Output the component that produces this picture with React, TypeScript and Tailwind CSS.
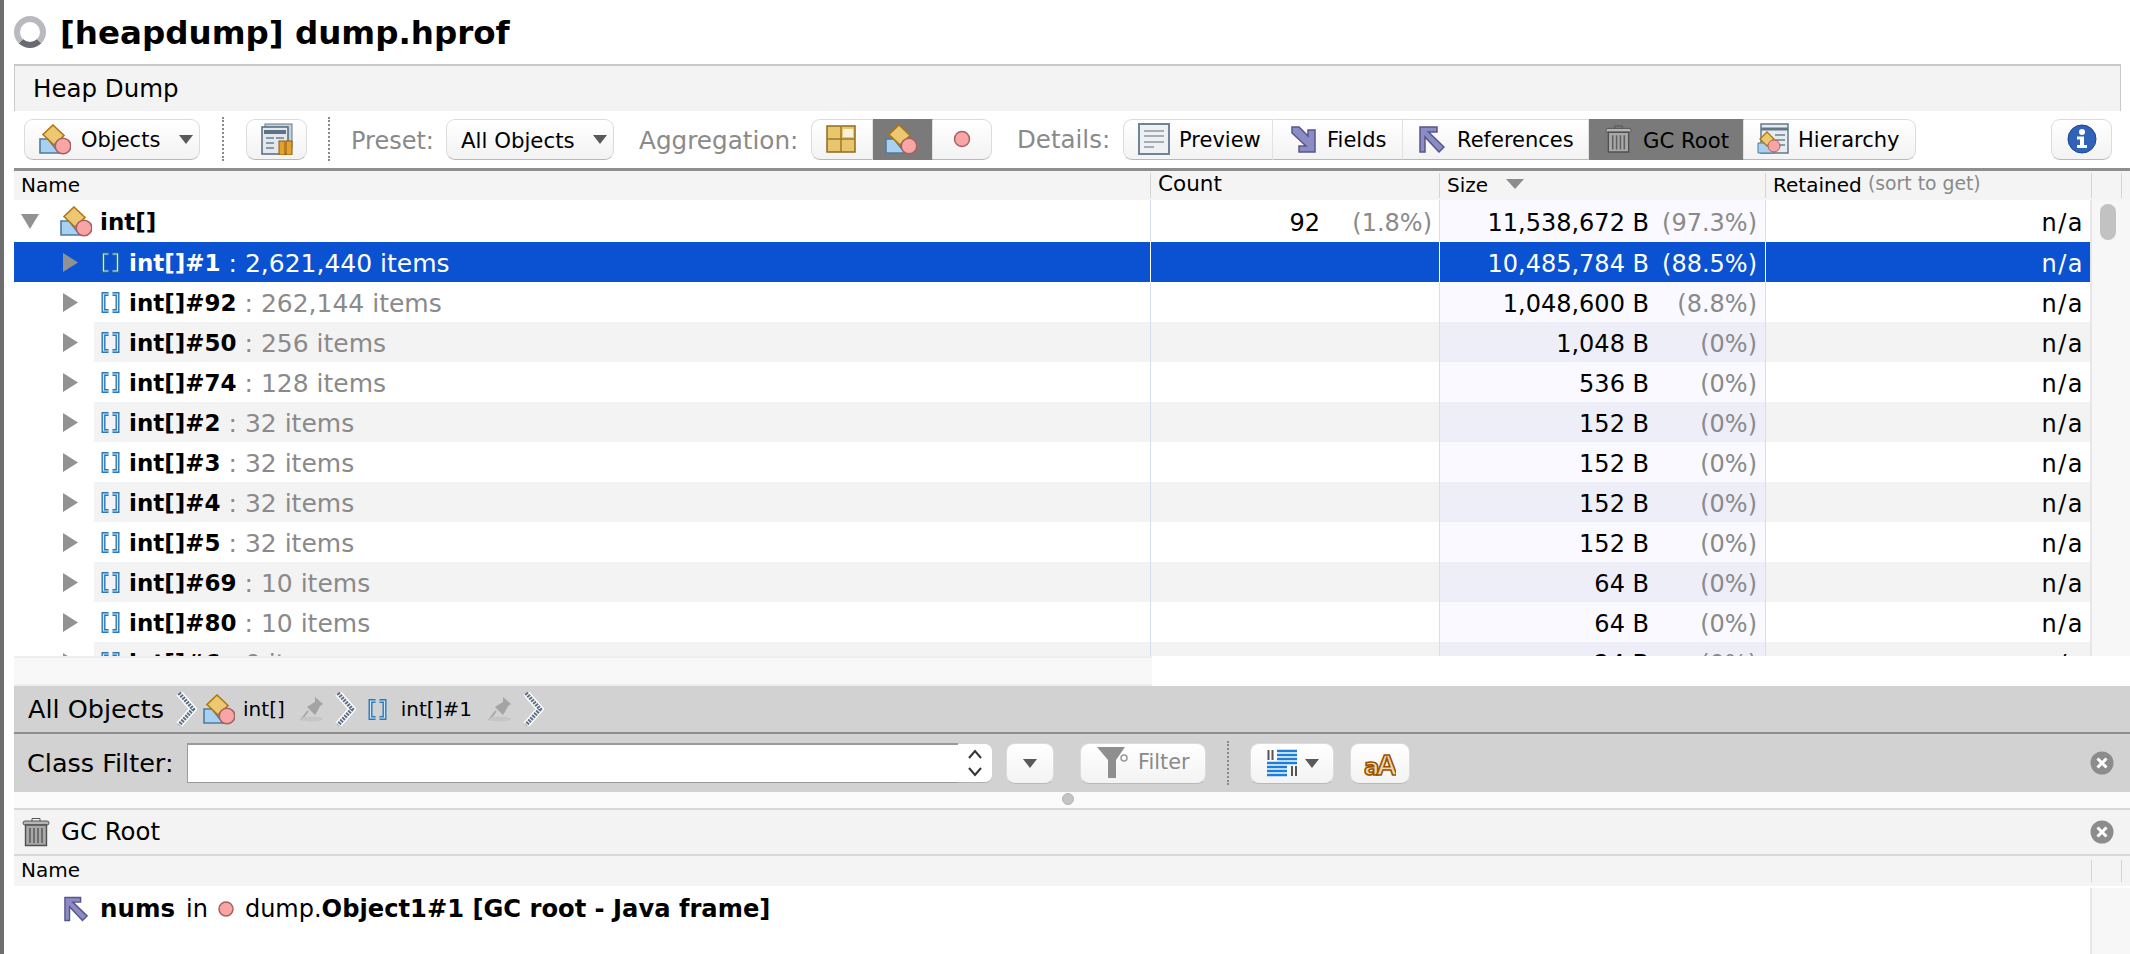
import type { ReactNode } from 'react';

// Small drawings used across the toolbars and the tree
const ObjectsIcon = ({ className = 'w-[32px] h-[31px]' }: { className?: string }) => (
  <svg viewBox="0 0 32 31" className={`${className} shrink-0`}>
    <path d="M1 15h8l11 14H1z" fill="#a9d0f0" stroke="#4c7c9e" strokeWidth="1.6" />
    <path d="M14 1l11 10.500L15 21 4 10.500z" fill="#ecc873" stroke="#b1770f" strokeWidth="1.6" />
    <circle cx="24" cy="22" r="7.800" fill="#f8a5a5" stroke="#a85f63" strokeWidth="1.6" />
  </svg>
);

const ArrayIcon = ({ muted = false }: { muted?: boolean }) => (
  <svg viewBox="0 0 19 21" className="w-[19px] h-[21px] shrink-0">
    <path d="M7.500 2H2.500v17h5M11.500 2h5v17h-5" fill="none" stroke={muted ? '#1c62a0' : '#2a78b8'} strokeWidth="4" />
    <path d="M7.500 2H2.500v17h5M11.500 2h5v17h-5" fill="none" stroke="#d4e9f8" strokeWidth="1.200" />
  </svg>
);

const TrashIcon = ({ className = 'w-[28px] h-[30px]' }: { className?: string }) => (
  <svg viewBox="0 0 28 30" className={`${className} shrink-0`}>
    <rect x="1" y="4" width="26" height="4" rx="2" fill="#b5b5b5" stroke="#555" />
    <path d="M10 4V1.500h8V4" fill="none" stroke="#555" />
    <path d="M3.500 8h21v20.500h-21z" fill="#a8a8a8" stroke="#505050" strokeWidth="1.400" />
    <path d="M8 11v15M12 11v15M16 11v15M20 11v15" stroke="#5f5f5f" strokeWidth="1.600" />
  </svg>
);

const ArrowUpLeft = ({ className = 'w-[26px] h-[27px]' }: { className?: string }) => (
  <svg viewBox="0 0 26 27" className={`${className} shrink-0`}>
    <path d="M1 1h17v5H9.500L25 21l-5 5L6 11v15H1z" fill="#8c8cc4" stroke="#55558a" strokeWidth="1.500" />
  </svg>
);

const ArrowDownRight = () => (
  <svg viewBox="0 0 26 27" className="w-[26px] h-[27px] shrink-0">
    <path d="M2 1h7l9 9V4h7v22H9v-6h7L2 7z" fill="#8c8cc4" stroke="#55558a" strokeWidth="1.500" />
  </svg>
);

const Caret = () => (
  <svg viewBox="0 0 14 9" className="w-[14px] h-[9px] shrink-0">
    <path d="M0 0h14L7 9z" fill="#5a5a5a" />
  </svg>
);

const TreeArrow = () => (
  <svg viewBox="0 0 15 19" className="w-[15px] h-[19px] shrink-0">
    <path d="M0 0l15 9.500L0 19z" fill="#929292" />
  </svg>
);

const Chevron = () => (
  <svg viewBox="0 0 22 34" className="w-[22px] h-[34px] shrink-0">
    <path d="M4 1l14 16L4 33" fill="none" stroke="#fff" strokeWidth="7" />
    <path d="M4 1l14 16L4 33" fill="none" stroke="#5f7088" strokeWidth="4" strokeDasharray="2 1" />
  </svg>
);

const Pin = () => (
  <svg viewBox="0 0 28 28" className="w-[28px] h-[28px] shrink-0">
    <path d="M17 2l8 7-3 2-3 6-2 3-8-8 3-2 5-3z" fill="#a4a4a4" />
    <path d="M10 16L3 25" stroke="#a8a8a8" strokeWidth="2" />
    <ellipse cx="14" cy="24" rx="11" ry="2.500" fill="#c6c6c6" />
  </svg>
);

const CloseDot = () => (
  <svg viewBox="0 0 24 24" className="w-[24px] h-[24px] shrink-0">
    <circle cx="12" cy="12" r="11.500" fill="#8c8c8c" />
    <path d="M7.500 7.500l9 9M16.500 7.500l-9 9" stroke="#fff" strokeWidth="3" />
  </svg>
);

const ToolbarButton = ({ width, className = '', children }: { width: string; className?: string; children: ReactNode }) => (
  <div
    className={`${width} h-[41px] flex items-center shrink-0 rounded-[9px] border border-[#dcdcdc] border-b-[#b8b8b8] bg-linear-to-b from-white to-[#f3f3f3] ${className}`}
  >
    {children}
  </div>
);

const Dotted = ({ className = '' }: { className?: string }) => (
  <div className={`w-0 h-[44px] border-l-2 border-dotted border-[#8a8a8a] shrink-0 ${className}`} />
);

const Seg = ({
  width,
  active = false,
  first = false,
  last = false,
  children,
}: {
  width: string;
  active?: boolean;
  first?: boolean;
  last?: boolean;
  children: ReactNode;
}) => (
  <div
    className={`${width} h-[41px] flex items-center shrink-0 border-y ${
      active
        ? 'bg-[#7a7a7a] border-[#7a7a7a]'
        : 'bg-linear-to-b from-white to-[#f3f3f3] border-t-[#dcdcdc] border-b-[#b8b8b8]'
    } ${first ? 'rounded-l-[9px] border-l border-l-[#dcdcdc]' : ''} ${last ? 'rounded-r-[9px] border-r border-r-[#dcdcdc]' : 'border-r border-r-[#e2e2e2]'}`}
  >
    {children}
  </div>
);

type Row = { name: string; items: string; size: string; pct: string };

const rows: Row[] = [
  { name: 'int[]#1', items: '2,621,440 items', size: '10,485,784 B', pct: '(88.5%)' },
  { name: 'int[]#92', items: '262,144 items', size: '1,048,600 B', pct: '(8.8%)' },
  { name: 'int[]#50', items: '256 items', size: '1,048 B', pct: '(0%)' },
  { name: 'int[]#74', items: '128 items', size: '536 B', pct: '(0%)' },
  { name: 'int[]#2', items: '32 items', size: '152 B', pct: '(0%)' },
  { name: 'int[]#3', items: '32 items', size: '152 B', pct: '(0%)' },
  { name: 'int[]#4', items: '32 items', size: '152 B', pct: '(0%)' },
  { name: 'int[]#5', items: '32 items', size: '152 B', pct: '(0%)' },
  { name: 'int[]#69', items: '10 items', size: '64 B', pct: '(0%)' },
  { name: 'int[]#80', items: '10 items', size: '64 B', pct: '(0%)' },
  { name: 'int[]#6', items: '0 items', size: '24 B', pct: '(0%)' },
];

const TreeRow = ({ row, index }: { row: Row; index: number }) => {
  const selected = index === 0;
  const striped = index % 2 === 0 && !selected;
  return (
    <div className={`flex h-[40px] shrink-0 ${selected ? 'bg-[#0a52d1] text-white' : 'text-black'}`}>
      <div className="w-[1136px] flex items-center shrink-0">
        <div className="w-[80px] pl-[49px] flex items-center shrink-0">
          <TreeArrow />
        </div>
        <div className={`flex-1 h-full flex items-center ${striped ? 'bg-[#f3f3f3]' : ''}`}>
          <div className="ml-[7px] mr-[9px]">
            <ArrayIcon muted={selected} />
          </div>
          <span className="mt-[3px] font-bold text-[23px] whitespace-pre">{row.name}</span>
          <span className={`mt-[3px] text-[25px] whitespace-pre ${selected ? 'text-white' : 'text-[#8a8a8a]'}`}> : {row.items}</span>
        </div>
      </div>
      <div
        className={`w-[289px] shrink-0 border-l ${selected ? 'border-white' : 'border-[#d6dff0]'} ${striped ? 'bg-[#f3f3f3]' : ''}`}
      />
      <div
        className={`w-[326px] shrink-0 flex items-center justify-end pr-[8px] pt-[3px] border-l text-[24px] ${
          selected ? 'border-white' : striped ? 'bg-[#eeeef8] border-[#d6dff0]' : 'bg-[#f9f9ff] border-[#d6dff0]'
        }`}
      >
        <span>{row.size}</span>
        <span className={`w-[108px] text-right ${selected ? 'text-white' : 'text-[#8a8a8a]'}`}>{row.pct}</span>
      </div>
      <div
        className={`w-[325px] shrink-0 flex items-center justify-end pr-[6px] pt-[3px] border-l text-[24px] tracking-[1.500px] ${
          selected ? 'border-white' : 'border-[#d6dff0]'
        } ${striped ? 'bg-[#f3f3f3]' : ''}`}
      >
        n/a
      </div>
    </div>
  );
};

export default function App() {
  return (
    <div className="flex w-[2130px] h-[954px] overflow-hidden bg-white text-black font-['DejaVu_Sans',sans-serif]">
      <div className="w-[4px] shrink-0 bg-[#6e6e6e]" />
      <div className="flex-1 min-w-0 flex flex-col pl-[10px]">
        {/* Title */}
        <div className="h-[64px] shrink-0 flex items-center">
          <div className="w-[32px] h-[32px] rounded-full border-[6px] border-[#b9b9c0] border-b-[#6a6a72] shrink-0" />
          <h1 className="ml-[14px] text-[32.500px] font-bold leading-none pt-[3px]">[heapdump] dump.hprof</h1>
        </div>

        {/* Tab strip */}
        <div className="h-[47px] w-[2107px] shrink-0 flex items-center pl-[18px] pt-[2px] bg-[#f3f3f3] border-t-2 border-x border-[#c9c9c9] text-[24.500px]">
          Heap Dump
        </div>

        {/* Main toolbar */}
        <div className="h-[57px] shrink-0 flex items-center pl-[10px] pb-[1px]">
          <ToolbarButton width="w-[176px]" className="pl-[14px] pr-[6px]">
            <ObjectsIcon />
            <span className="ml-[10px] mt-[4px] text-[21px]">Objects</span>
            <span className="ml-auto"><Caret /></span>
          </ToolbarButton>
          <Dotted className="ml-[22px]" />
          <ToolbarButton width="w-[61px]" className="ml-[22px] justify-center">
            <svg viewBox="0 0 32 32" className="w-[32px] h-[32px]">
              <rect x="4" y="1" width="27" height="24" fill="#c8d2da" stroke="#62788a" />
              <rect x="1" y="4" width="26" height="27" fill="#e4e8ec" stroke="#53697c" strokeWidth="1.500" />
              <path d="M3 7h22v4H3z" fill="#5d7488" />
              <path d="M5 15h8M15 15h8M5 20h8M5 25h8" stroke="#8799a8" strokeWidth="2" />
              <rect x="18" y="18" width="6" height="14" fill="#e2a22b" stroke="#8d5a10" />
              <rect x="25" y="18" width="6" height="14" fill="#e2a22b" stroke="#8d5a10" />
            </svg>
          </ToolbarButton>
          <Dotted className="ml-[21px]" />
          <span className="ml-[21px] mt-[3px] w-[95px] shrink-0 text-[24px] text-[#8a8a8a]">Preset:</span>
          <ToolbarButton width="w-[168px]" className="pl-[14px] pr-[6px]">
            <span className="mt-[4px] text-[21.300px] whitespace-nowrap">All Objects</span>
            <span className="ml-auto"><Caret /></span>
          </ToolbarButton>
          <span className="ml-[25px] mt-[3px] w-[172px] shrink-0 text-[24.700px] text-[#8a8a8a]">Aggregation:</span>
          <div className="flex shrink-0">
            <Seg width="w-[62px]" first>
              <svg viewBox="0 0 30 28" className="w-[30px] h-[28px] ml-[14px]">
                <rect x="1" y="1" width="28" height="26" fill="#e9c66e" stroke="#8e6b1e" strokeWidth="1.500" />
                <path d="M15 1v26M1 14h28" stroke="#9a7a2c" strokeWidth="1.500" />
                <rect x="17" y="4" width="10" height="8" fill="#f8f1da" />
              </svg>
            </Seg>
            <Seg width="w-[60px]" active>
              <span className="ml-[12px]"><ObjectsIcon /></span>
            </Seg>
            <Seg width="w-[59px]" last>
              <svg viewBox="0 0 18 18" className="w-[18px] h-[18px] ml-[20px]">
                <circle cx="9" cy="9" r="7.500" fill="#f8a5a5" stroke="#a85f63" strokeWidth="1.500" />
              </svg>
            </Seg>
          </div>
          <span className="ml-[25px] mt-[3px] w-[106px] shrink-0 text-[24.500px] text-[#8a8a8a]">Details:</span>
          <div className="flex shrink-0">
            <Seg width="w-[150px]" first>
              <svg viewBox="0 0 32 32" className="w-[32px] h-[32px] ml-[14px]">
                <rect x="1" y="1" width="30" height="30" fill="#eef0f2" stroke="#6f8496" strokeWidth="2" />
                <path d="M6 8h20M6 13h20M6 19h20M6 24h10" stroke="#a4aeb6" strokeWidth="2" />
              </svg>
              <span className="ml-[9px] mt-[4px] text-[21px]">Preview</span>
            </Seg>
            <Seg width="w-[130px]">
              <span className="ml-[17px]"><ArrowDownRight /></span>
              <span className="ml-[11px] mt-[4px] text-[21px]">Fields</span>
            </Seg>
            <Seg width="w-[186px]">
              <span className="ml-[16px]"><ArrowUpLeft /></span>
              <span className="ml-[12px] mt-[4px] text-[21px]">References</span>
            </Seg>
            <Seg width="w-[155px]" active>
              <span className="ml-[16px]"><TrashIcon className="w-[27px] h-[30px]" /></span>
              <span className="ml-[11px] mt-[4px] text-[21.200px]">GC Root</span>
            </Seg>
            <Seg width="w-[172px]" last>
              <svg viewBox="0 0 32 32" className="w-[32px] h-[32px] ml-[13px]">
                <rect x="4" y="1" width="27" height="29" fill="#e8ebee" stroke="#62788a" strokeWidth="1.500" />
                <path d="M4 6h27" stroke="#62788a" strokeWidth="3" />
                <path d="M18 12h10M18 17h10M18 22h10" stroke="#8c9aa6" strokeWidth="2" />
                <path d="M1 20h16v10H1z" fill="#a9d0f0" stroke="#4c7c9e" />
                <path d="M10 9l7 7-7 7-7-7z" fill="#ecc873" stroke="#b1770f" strokeWidth="1.300" />
                <circle cx="17" cy="23" r="6" fill="#f8a5a5" stroke="#a85f63" />
              </svg>
              <span className="ml-[9px] mt-[4px] text-[21px]">Hierarchy</span>
            </Seg>
          </div>
          <ToolbarButton width="w-[61px]" className="ml-auto mr-[18px] justify-center">
            <svg viewBox="0 0 30 30" className="w-[30px] h-[30px]">
              <circle cx="15" cy="15" r="14" fill="#2f62b8" stroke="#1d4488" />
              <circle cx="15" cy="8" r="3" fill="#fff" />
              <path d="M10 12.500h7V21h3v3H10v-3h3v-5.500h-3z" fill="#fff" />
            </svg>
          </ToolbarButton>
        </div>

        <div className="h-[3px] shrink-0 bg-[#8e8e8e]" />

        {/* Column headers */}
        <div className="h-[29px] shrink-0 flex bg-[#f4f4f4] text-[20px]">
          <div className="w-[1136px] shrink-0 pl-[7px] pb-[2px] flex items-center">Name</div>
          <div className="w-[289px] shrink-0 my-[2px] pl-[7px] pb-[2px] flex items-center border-l border-[#d4d4d4] text-[21.500px]">Count</div>
          <div className="w-[326px] shrink-0 my-[2px] pl-[7px] pb-[2px] flex items-center border-l border-[#d4d4d4]">
            Size
            <span className="ml-[18px] mb-[2px]">
              <svg viewBox="0 0 18 10" className="w-[18px] h-[10px]">
                <path d="M0 0h18L9 10z" fill="#8c8c8c" />
              </svg>
            </span>
          </div>
          <div className="w-[326px] shrink-0 my-[2px] pl-[7px] pb-[2px] flex items-center border-l border-[#d4d4d4] whitespace-pre">
            Retained <span className="text-[18.800px] text-[#8a8a8a]">(sort to get)</span>
          </div>
          <div className="w-[30px] shrink-0 my-[2px] border-l border-[#d4d4d4]" />
          <div className="flex-1 my-[2px] border-l border-[#d4d4d4]" />
        </div>

        {/* Tree table */}
        <div className="h-[456px] shrink-0 flex overflow-hidden">
          <div className="w-[2076px] shrink-0 flex flex-col">
            <div className="flex h-[42px] shrink-0">
              <div className="w-[1136px] shrink-0 flex items-center">
                <svg viewBox="0 0 18 15" className="w-[18px] h-[15px] ml-[7px] shrink-0">
                  <path d="M0 0h18L9 15z" fill="#929292" />
                </svg>
                <span className="ml-[21px]"><ObjectsIcon /></span>
                <span className="ml-[8px] mt-[3px] font-bold text-[23px]">int[]</span>
              </div>
              <div className="w-[289px] shrink-0 flex items-center justify-end pr-[7px] pt-[3px] border-l border-[#d6dff0] text-[24px]">
                <span>92</span>
                <span className="w-[112px] text-right text-[#8a8a8a]">(1.8%)</span>
              </div>
              <div className="w-[326px] shrink-0 flex items-center justify-end pr-[8px] pt-[3px] border-l border-[#d6dff0] bg-[#f9f9ff] text-[24px]">
                <span>11,538,672 B</span>
                <span className="w-[108px] text-right text-[#8a8a8a]">(97.3%)</span>
              </div>
              <div className="w-[325px] shrink-0 flex items-center justify-end pr-[6px] pt-[3px] border-l border-[#d6dff0] text-[24px] tracking-[1.500px]">n/a</div>
            </div>
            {rows.map((row, i) => (
              <TreeRow key={row.name} row={row} index={i} />
            ))}
          </div>
          <div className="flex-1 bg-[#f7f7f7] border-l-2 border-[#e6e6e6] pl-[8px] pt-[4px]">
            <div className="w-[16px] h-[36px] rounded-full bg-[#c2c2c2]" />
          </div>
        </div>

        {/* Horizontal scroll strip */}
        <div className="h-[30px] shrink-0 w-[1138px] bg-[#f8f8f8] border-t-2 border-b-2 border-[#eeeeee]" />

        {/* Breadcrumb */}
        <div className="h-[46px] shrink-0 flex items-center pl-[14px] bg-[#d2d2d2]">
          <span className="text-[25.500px] whitespace-nowrap">All Objects</span>
          <span className="ml-[11px]"><Chevron /></span>
          <span className="ml-[6px]"><ObjectsIcon /></span>
          <span className="ml-[8px] text-[20px]">int[]</span>
          <span className="ml-[13px]"><Pin /></span>
          <span className="ml-[8px]"><Chevron /></span>
          <span className="ml-[12px]"><ArrayIcon /></span>
          <span className="ml-[14px] text-[20px]">int[]#1</span>
          <span className="ml-[14px]"><Pin /></span>
          <span className="ml-[8px]"><Chevron /></span>
        </div>
        <div className="h-[2px] shrink-0 bg-[#8e8e8e]" />

        {/* Class filter */}
        <div className="h-[58px] shrink-0 flex items-center pl-[13px] bg-[#d2d2d2]">
          <span className="w-[160px] shrink-0 text-[25.500px] whitespace-nowrap">Class Filter:</span>
          <div className="w-[771px] h-[40px] shrink-0 bg-white border-t-2 border-b border-l border-[#9a9a9a]" />
          <div className="w-[34px] h-[39px] shrink-0 bg-white rounded-r-[7px] border-b border-[#b0b0b0] flex items-center justify-center">
            <svg viewBox="0 0 16 30" className="w-[16px] h-[30px]">
              <path d="M2 10l6-7 6 7M2 20l6 7 6-7" fill="none" stroke="#333" strokeWidth="2" />
            </svg>
          </div>
          <ToolbarButton width="w-[48px]" className="ml-[14px] justify-center">
            <Caret />
          </ToolbarButton>
          <ToolbarButton width="w-[126px]" className="ml-[26px] pl-[15px]">
            <svg viewBox="0 0 34 38" className="w-[34px] h-[38px] shrink-0">
              <path d="M1 3h28L20 16v18h-8V16z" fill="#8f8f8f" />
              <circle cx="28" cy="14" r="3" fill="none" stroke="#9a9a9a" strokeWidth="1.500" />
            </svg>
            <span className="ml-[8px] text-[20.800px] text-[#8a8a8a]">Filter</span>
          </ToolbarButton>
          <Dotted className="ml-[21px]" />
          <ToolbarButton width="w-[84px]" className="ml-[21px] pl-[16px]">
            <svg viewBox="0 0 30 28" className="w-[30px] h-[28px] shrink-0">
              <path d="M10 2h20M10 6h20M10 10h20" stroke="#1a7fd8" strokeWidth="2.500" />
              <path d="M0 14h30" stroke="#1a7fd8" strokeWidth="2.500" />
              <path d="M0 18h20M0 22h20M0 26h20" stroke="#1a7fd8" strokeWidth="2.500" />
              <path d="M1.500 1v10M5.500 1v10M25 17v10M29 17v10" stroke="#555" strokeWidth="2" />
            </svg>
            <span className="ml-[8px]"><Caret /></span>
          </ToolbarButton>
          <ToolbarButton width="w-[60px]" className="ml-[16px] justify-center">
            <svg viewBox="0 0 32 30" className="w-[32px] h-[30px]">
              <text x="0" y="27" fontSize="23" fontWeight="700" fill="#f0d6a8" stroke="#9a5200" strokeWidth="1.600" fontFamily="'DejaVu Sans', sans-serif">a</text>
              <text x="12" y="27" fontSize="30" fontWeight="700" fill="#f0d6a8" stroke="#9a5200" strokeWidth="1.600" fontFamily="'Liberation Sans', sans-serif">A</text>
            </svg>
          </ToolbarButton>
          <span className="ml-auto mr-[16px]"><CloseDot /></span>
        </div>

        {/* Splitter */}
        <div className="h-[16px] shrink-0 flex justify-center bg-[#fbfbfb] pr-[8px]">
          <div className="w-[12px] h-[12px] mt-[1px] rounded-full bg-[#c4c4c4] border border-[#b4b4b4]" />
        </div>
        <div className="h-[2px] shrink-0 bg-[#d8d8d8]" />

        {/* GC Root panel */}
        <div className="h-[44px] shrink-0 flex items-center pl-[8px] bg-[#f3f3f3]">
          <TrashIcon />
          <span className="ml-[11px] text-[24.400px]">GC Root</span>
          <span className="ml-auto mr-[16px]"><CloseDot /></span>
        </div>
        <div className="h-[2px] shrink-0 bg-[#d8d8d8]" />
        <div className="h-[30px] shrink-0 flex bg-[#f4f4f4] text-[20px]">
          <div className="w-[2077px] shrink-0 pl-[7px] pb-[2px] flex items-center">Name</div>
          <div className="w-[30px] shrink-0 my-[4px] border-l border-[#d4d4d4]" />
          <div className="flex-1 my-[4px] border-l border-[#d4d4d4]" />
        </div>
        <div className="flex-1 min-h-0 flex">
          <div className="w-[2076px] shrink-0 h-[46px] flex items-center pl-[50px]">
            <ArrowUpLeft className="w-[24px] h-[26px]" />
            <span className="ml-[12px] font-bold text-[24.500px]">nums</span>
            <span className="ml-[11px] text-[24px]">in</span>
            <svg viewBox="0 0 16 18" className="w-[16px] h-[18px] ml-[10px] shrink-0">
              <circle cx="8" cy="9" r="7" fill="#f8a5a5" stroke="#a85f63" strokeWidth="1.500" />
            </svg>
            <span className="ml-[11px] text-[24px]">dump.</span>
            <span className="font-bold text-[24.200px] whitespace-nowrap">Object1#1 [GC root - Java frame]</span>
          </div>
          <div className="flex-1 mt-[2px] bg-[#f7f7f7] border-l-2 border-[#e6e6e6]" />
        </div>
      </div>
    </div>
  );
}
